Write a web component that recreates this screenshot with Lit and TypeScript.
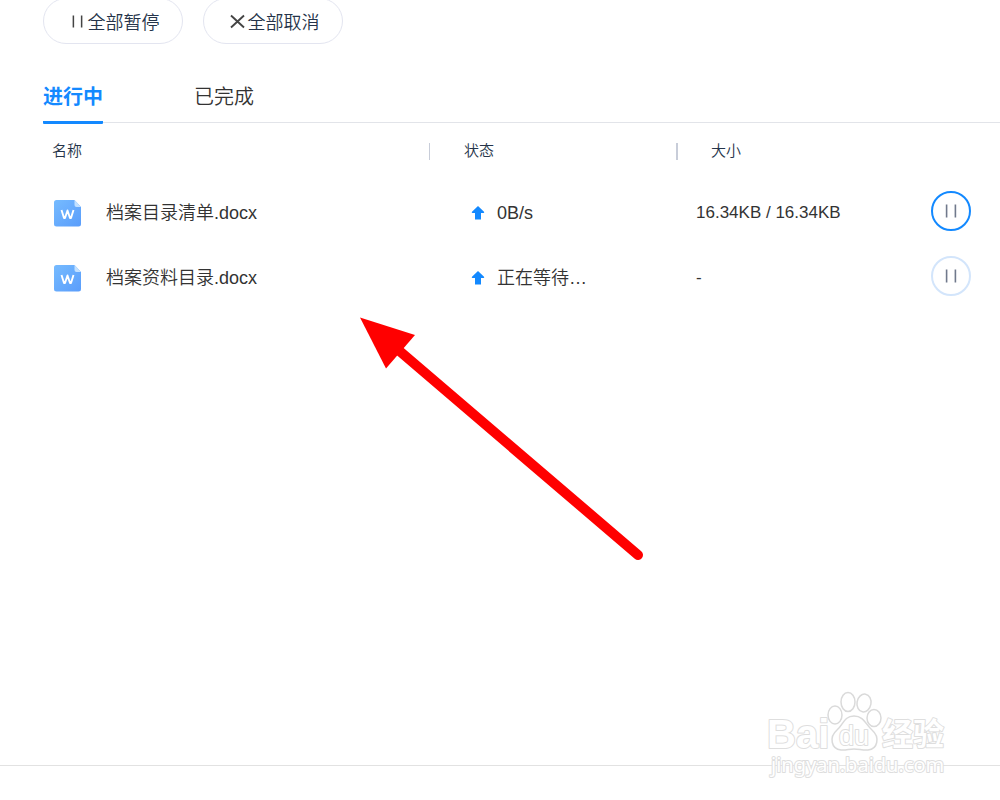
import { LitElement, html, css, svg } from "lit";
import { customElement, property, state } from "lit/decorators.js";

interface Transfer {
  name: string;
  status: string;
  size: string;
  active: boolean;
}

const pauseIcon = (size: number) => html`<svg width=${size} height=${size} viewBox="0 0 16 16" fill="none" stroke="currentColor" stroke-width="1.6" aria-hidden="true">
  <path d="M3.6 1.5v13M12.4 1.5v13" />
</svg>`;

@customElement("upload-list")
export class UploadList extends LitElement {
  @property({ attribute: false }) items: Transfer[] = [];

  static styles = css`
    :host { display: block; }
    table { width: 100%; border-collapse: collapse; table-layout: fixed; }
    .col-status { width: 247px; }
    .col-size { width: 224px; }
    .col-action { width: 100px; }
    th { height: 57px; padding: 0; text-align: left; font-size: 15px; font-weight: 350; color: #25344a; }
    .first { display: block; height: 17px; line-height: 15px; padding-left: 9px; }
    .divided { display: block; height: 17px; line-height: 15px; padding-left: 34px; border-left: 1px solid #c8cdd9; }
    .divided.strong { border-left-width: 2px; padding-left: 33px; }
    td { height: 65px; padding: 0; font-size: 18px; line-height: 24px; color: #333; white-space: nowrap; }
    .name { display: flex; align-items: center; gap: 24px; padding-left: 11px; }
    .status { display: flex; align-items: center; gap: 12px; padding-left: 42px; }
    .size { padding-left: 20px; font-size: 17px; }
    .round { display: flex; align-items: center; justify-content: center; width: 40px; height: 40px; margin: 0 0 4px 31px; padding: 0; border: 2px solid #d3e5fb; border-radius: 50%; background: #fff; color: #70798c; cursor: pointer; }
    .round.active { border-color: #1389ff; }
    svg { display: block; flex: none; }
  `;

  private fileIcon() {
    return html`<svg width="28" height="28" viewBox="0 0 28 28" aria-hidden="true">
      <defs>
        <linearGradient id="doc" x1="0" y1="0" x2="1" y2="1">
          <stop offset="0" stop-color="#76bbff" /><stop offset="1" stop-color="#5a9dfb" />
        </linearGradient>
      </defs>
      <path d="M2.500 1h18l6.500 7v17a2.500 2.500 0 0 1-2.500 2.500h-22a2.500 2.500 0 0 1-2.500-2.500v-21.500a2.500 2.500 0 0 1 2.500-2.500z" fill="url(#doc)" />
      <path d="M20.500 1l6.500 7h-4.500a2 2 0 0 1-2-2z" fill="#c3e1ff" />
      <path d="M7.500 11l2.500 8h1l2.500-7.500 2.500 7.500h1l2.500-8" fill="none" stroke="#fff" stroke-width="1.900" stroke-linejoin="round" />
    </svg>`;
  }

  render() {
    return html`<table>
      <colgroup><col /><col class="col-status" /><col class="col-size" /><col class="col-action" /></colgroup>
      <thead>
        <tr>
          <th scope="col"><span class="first">名称</span></th>
          <th scope="col"><span class="divided">状态</span></th>
          <th scope="col"><span class="divided strong">大小</span></th>
          <th scope="col" aria-label="操作"></th>
        </tr>
      </thead>
      <tbody>
        ${this.items.map((item) => html`<tr>
          <td><div class="name">${this.fileIcon()}<span>${item.name}</span></div></td>
          <td><div class="status">
            <svg width="14" height="14" viewBox="0 0 14 14" aria-hidden="true"><path d="M7 0l6 5.800q.8 1.200-.6 1.200h-2.400v6.500h-6v-6.500h-2.400q-1.400 0-.6-1.200z" fill="#1389ff" /></svg>
            <span>${item.status}</span>
          </div></td>
          <td><div class="size">${item.size}</div></td>
          <td><button class="round ${item.active ? "active" : ""}" aria-label="暂停">${pauseIcon(16)}</button></td>
        </tr>`)}
      </tbody>
    </table>`;
  }
}

@customElement("site-watermark")
export class SiteWatermark extends LitElement {
  static styles = css`
    :host { display: block; }
    svg { display: block; }
    .brand, .du, .cjk, .url { fill: #fff; stroke: #dedede; stroke-width: 2px; stroke-linejoin: round; paint-order: stroke; }
    .brand { font: 700 40px "Liberation Sans", sans-serif; }
    .du { font: 400 27px "Liberation Sans", sans-serif; }
    .cjk { font: 700 31px "Noto Sans CJK SC", sans-serif; }
    .url { font: 400 20px "Noto Sans", sans-serif; }
    .paw { fill: #fff; stroke: #dadada; stroke-width: 1.5px; }
  `;
  render() {
    return html`<svg width="190" height="100" viewBox="0 0 190 100">
      ${svg`<g class="paw">
        <ellipse cx="72" cy="25" rx="7" ry="9" />
        <ellipse cx="85" cy="12" rx="7" ry="9.500" />
        <ellipse cx="101" cy="13" rx="7" ry="9" transform="rotate(10 101 13)" />
        <ellipse cx="111" cy="28" rx="7" ry="8.500" />
        <path d="M91 26c-10 0-11 9-17 14-8 7-6 19 4 20 5 .5 8-1 13-1s9 1.500 14 1c10-1 12-13 4-20-6-5-8-14-18-14z" />
      </g>`}
      <text class="brand" x="4" y="58">Bai</text>
      <text class="du" x="76" y="55">du</text>
      <text class="cjk" x="119" y="55">经验</text>
      <text class="url" x="8" y="82">jingyan.baidu.com</text>
    </svg>`;
  }
}

@customElement("app-root")
export class AppRoot extends LitElement {
  @state() private tab = 0;

  private items: Transfer[] = [
    { name: "档案目录清单.docx", status: "0B/s", size: "16.34KB / 16.34KB", active: true },
    { name: "档案资料目录.docx", status: "正在等待…", size: "-", active: false },
  ];

  static styles = css`
    :host { display: flex; flex-direction: column; position: relative; box-sizing: border-box; min-height: 100vh; overflow: hidden; background: #fff; font-family: "Liberation Sans", "Noto Sans CJK SC", sans-serif; font-weight: 350; color: #333; }
    button { font: inherit; cursor: pointer; }
    main { flex: 1; padding-left: 43px; }
    .toolbar { display: flex; gap: 20px; margin-top: -2px; }
    .pill { display: flex; align-items: center; justify-content: center; gap: 3px; box-sizing: border-box; width: 140px; height: 46px; padding: 0 0 0 3px; border: 1px solid #e3e5f0; border-radius: 23px; background: #fff; color: #25344a; font-size: 18px; }
    .pill svg { color: #444; }
    .tabs { display: flex; gap: 91px; height: 78px; border-bottom: 1px solid #e2e4e9; }
    .tab { align-self: flex-end; height: 54px; margin-bottom: -2px; padding: 0; border: 0; border-bottom: 3px solid transparent; background: none; color: #333; font-size: 20px; }
    .tab.selected { border-color: #1389ff; border-radius: 1px; color: #1389ff; font-weight: 700; }
    footer { height: 34px; border-top: 1px solid #e2e2e2; }
    .pointer { position: absolute; left: 350px; top: 308px; }
    .mark { position: absolute; right: 47px; bottom: 10px; }
  `;

  render() {
    return html`
      <main>
        <div class="toolbar">
          <button class="pill">${pauseIcon(15)}<span>全部暂停</span></button>
          <button class="pill">
            <svg width="15" height="15" viewBox="0 0 15 15" fill="none" stroke="currentColor" stroke-width="1.900" aria-hidden="true"><path d="M1 1.500l13 12M14 1.500l-13 12" /></svg>
            <span>全部取消</span>
          </button>
        </div>
        <div class="tabs" role="tablist">
          ${["进行中", "已完成"].map((label, i) => html`<button class="tab ${i === this.tab ? "selected" : ""}" role="tab" aria-selected=${i === this.tab} @click=${() => (this.tab = i)}>${label}</button>`)}
        </div>
        <upload-list .items=${this.items}></upload-list>
      </main>
      <footer></footer>
      <svg class="pointer" width="300" height="260" viewBox="350 308 300 260" aria-hidden="true">
        <path d="M396 348L638 555" stroke="#f00" stroke-width="10" stroke-linecap="round" />
        <path d="M360 317.500L415 335L386 368.500z" fill="#f00" />
      </svg>
      <site-watermark class="mark"></site-watermark>
    `;
  }
}
